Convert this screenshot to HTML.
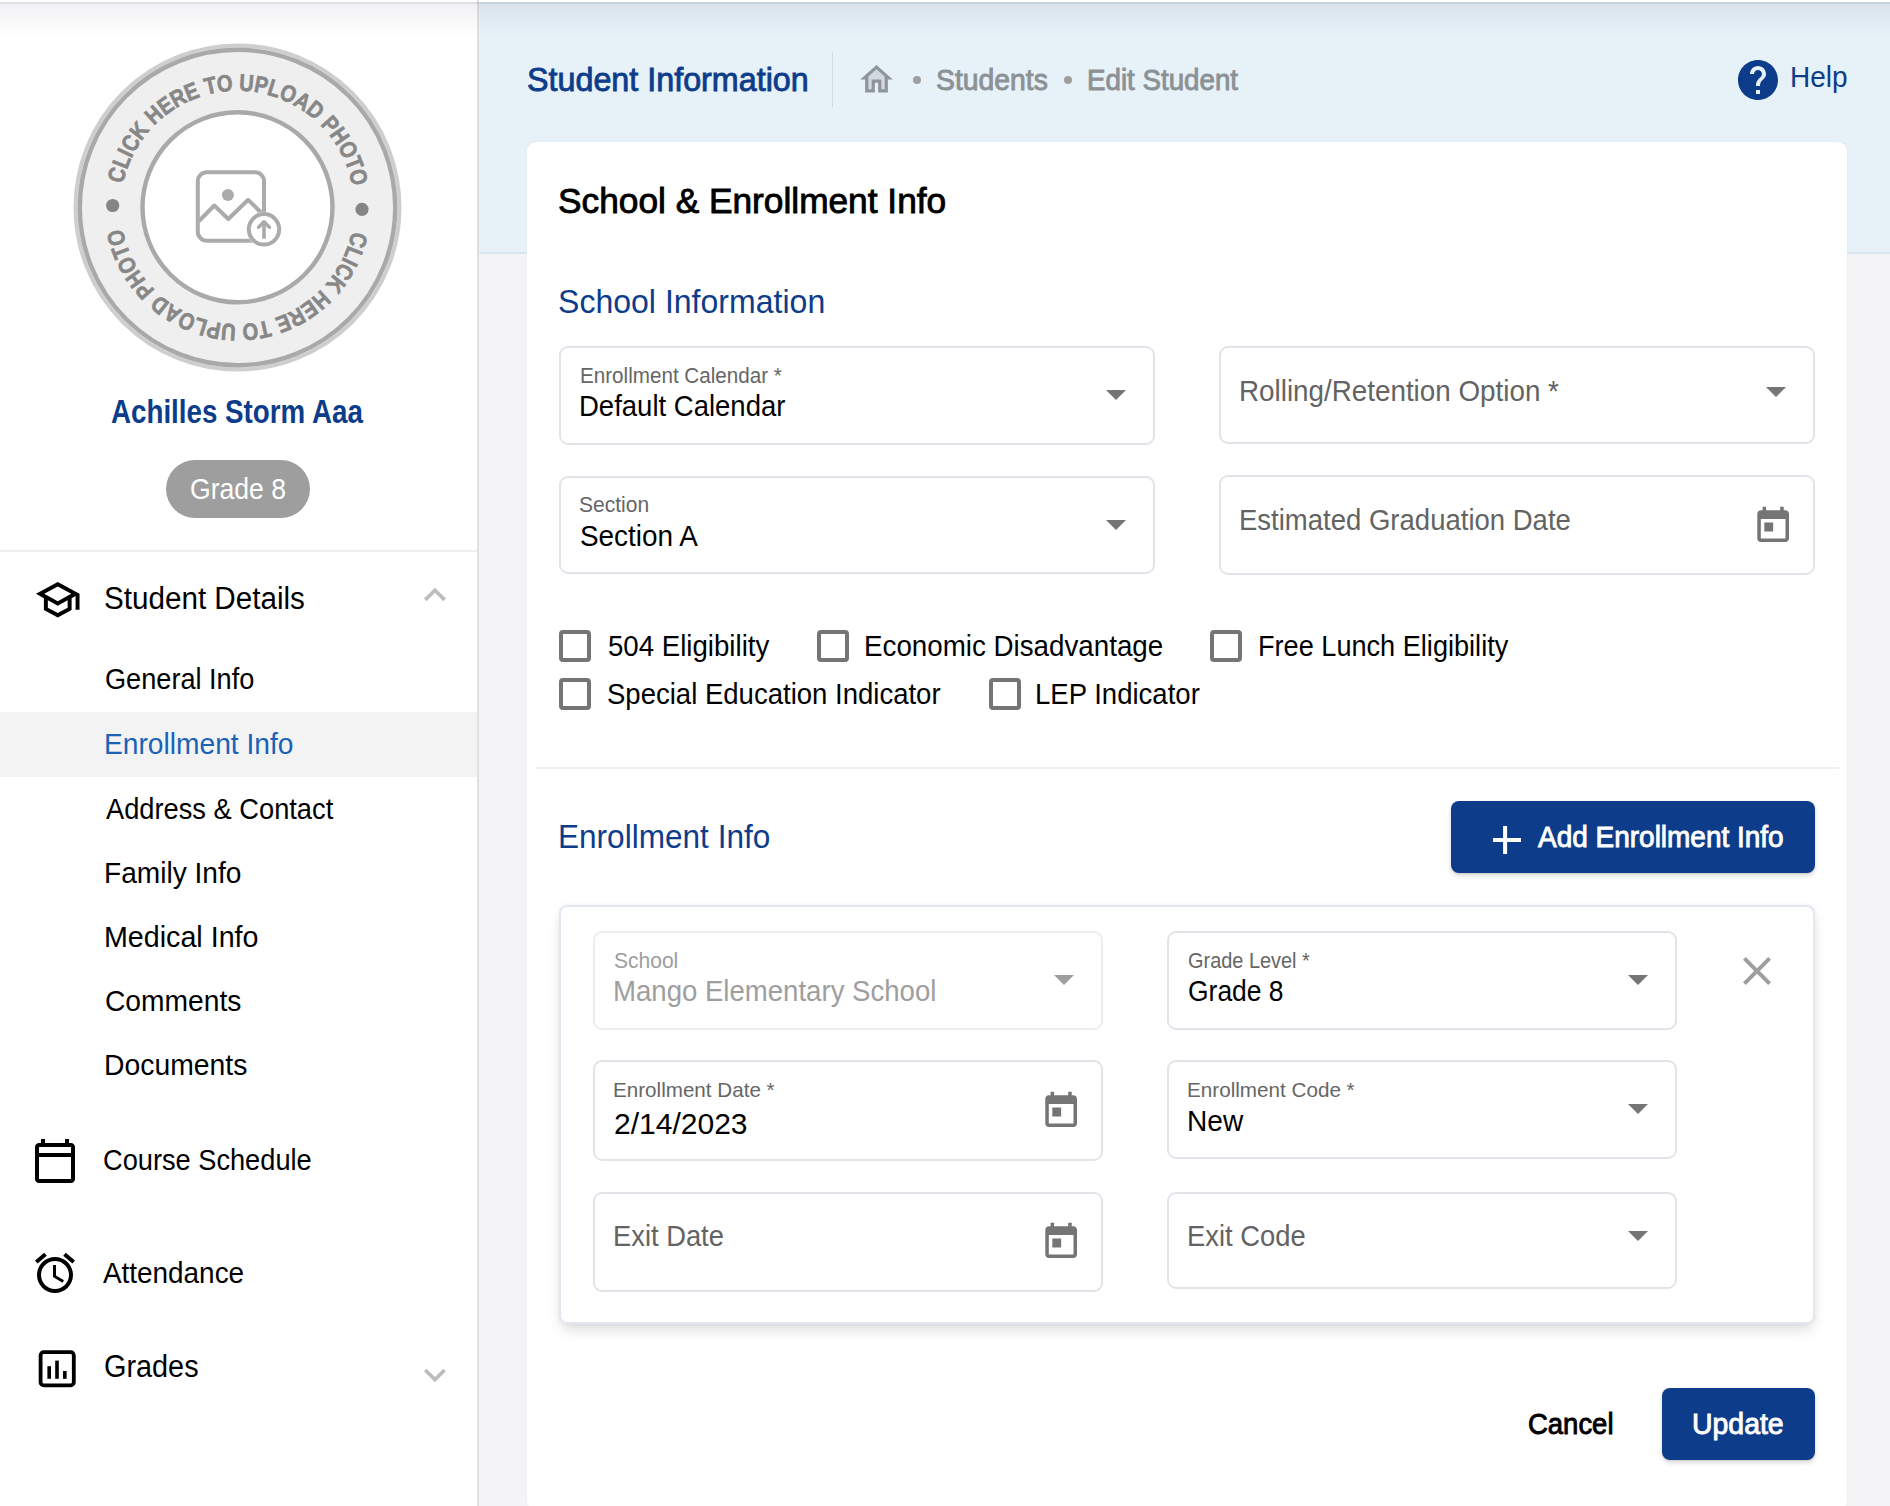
<!DOCTYPE html><html><head><meta charset="utf-8"><style>html,body{margin:0;padding:0;}body{width:1890px;height:1506px;overflow:hidden;position:relative;background:#fff;font-family:"Liberation Sans",sans-serif;}.t{position:absolute;white-space:nowrap;line-height:1;transform-origin:0 0;}</style></head><body>
<div style="position:absolute;left:479px;top:2px;width:1411px;height:251px;background:#e6f1f8;"></div>
<div style="position:absolute;left:479px;top:252px;width:1411px;height:2px;background:#d9e5ee;"></div>
<div style="position:absolute;left:479px;top:254px;width:1411px;height:1252px;background:#f4f4f7;"></div>
<div style="position:absolute;left:477px;top:0px;width:2px;height:1506px;background:#e1e1e2;"></div>
<div style="position:absolute;left:0px;top:2px;width:1890px;height:2px;background:rgba(30,20,60,0.14);"></div>
<div style="position:absolute;left:0px;top:4px;width:1890px;height:34px;background:linear-gradient(rgba(40,30,70,0.065),rgba(40,30,70,0.03) 45%,rgba(40,30,70,0.0));"></div>
<svg style="position:absolute;left:0px;top:0px;" width="478" height="400" viewBox="0 0 478 400"><circle cx="237.5" cy="207.5" r="162" fill="#efefef" stroke="#cecece" stroke-width="4"/><circle cx="237.5" cy="207.5" r="157.7" fill="none" stroke="#a9a9a9" stroke-width="4.4"/><circle cx="237.5" cy="206.7" r="95" fill="#fff" stroke="#a9a9a9" stroke-width="4.4" transform="translate(0,0.6)"/><defs><path id="arcTop" d="M 120.7 207.5 A 116.8 116.8 0 0 1 354.3 207.5"/><path id="arcBot" d="M 354.3 207.5 A 116.8 116.8 0 0 1 120.7 207.5"/></defs><text font-family="Liberation Sans" font-weight="bold" font-size="23.5" fill="#878787" stroke="#878787" stroke-width="0.7"><textPath href="#arcTop" startOffset="23.6" textLength="322.1" lengthAdjust="spacingAndGlyphs">CLICK HERE TO UPLOAD PHOTO</textPath></text><text font-family="Liberation Sans" font-weight="bold" font-size="23.5" fill="#878787" stroke="#878787" stroke-width="0.7"><textPath href="#arcBot" startOffset="23.6" textLength="322.1" lengthAdjust="spacingAndGlyphs">CLICK HERE TO UPLOAD PHOTO</textPath></text><circle cx="112.7" cy="205.5" r="6.6" fill="#858585"/><circle cx="362" cy="209.3" r="6.6" fill="#858585"/><rect x="197.8" y="172.3" width="66.2" height="68.4" rx="9" fill="none" stroke="#ababab" stroke-width="4"/><circle cx="227.9" cy="195" r="6" fill="#ababab"/><polyline points="199,221 214.3,205.5 228.3,219 248.2,199.8 262,213.5" fill="none" stroke="#ababab" stroke-width="4" stroke-linejoin="round"/><circle cx="264" cy="229.3" r="17.5" fill="#fff"/><circle cx="264" cy="229.3" r="15.2" fill="none" stroke="#ababab" stroke-width="4"/><path d="M264 237.5V222.5M258.6 227.2L264 221.8L269.4 227.2" fill="none" stroke="#ababab" stroke-width="3.6" stroke-linecap="round" stroke-linejoin="round"/></svg>
<div style="position:absolute;left:166px;top:460px;width:144px;height:58px;background:#9e9e9e;border-radius:29px;"></div>
<div style="position:absolute;left:0px;top:550px;width:477px;height:2px;background:#efefef;"></div>
<div style="position:absolute;left:0px;top:712px;width:477px;height:65px;background:#f3f3f3;"></div>
<svg style="position:absolute;left:33.5px;top:576.1px;" width="47.5" height="47.5" viewBox="0 0 24 24"><path d="M12 3 1 9l4 2.18v6L12 21l7-3.82v-6l2-1.09V17h2V9L12 3zm6.82 6L12 12.72 5.18 9 12 5.28 18.82 9zM17 15.99l-5 2.73-5-2.73v-3.72L12 15l5-2.73v3.72z" fill="#000"/></svg>
<svg style="position:absolute;left:413px;top:572.9px;" width="43.9" height="43.9" viewBox="0 0 24 24"><path d="M12 8l-6 6 1.41 1.41L12 10.83l4.59 4.58L18 14z" fill="#bdbdbd"/></svg>
<svg style="position:absolute;left:413px;top:1353.3px;" width="43.9" height="43.9" viewBox="0 0 24 24"><path d="M16.59 8.59 12 13.17 7.41 8.59 6 10l6 6 6-6z" fill="#bdbdbd"/></svg>
<svg style="position:absolute;left:31.05px;top:1136.9px;" width="48" height="48" viewBox="0 0 24 24"><path d="M20 3h-1V1h-2v2H7V1H5v2H4c-1.1 0-2 .9-2 2v16c0 1.1.9 2 2 2h16c1.1 0 2-.9 2-2V5c0-1.1-.9-2-2-2zm0 18H4V10h16v11zm0-13H4V5h16v3z" fill="#000"/></svg>
<svg style="position:absolute;left:31px;top:1249.3px;" width="48" height="48" viewBox="0 0 24 24"><path d="M22 5.72l-4.6-3.86-1.29 1.53 4.6 3.86L22 5.72zM7.88 3.39 6.6 1.86 2 5.71l1.29 1.53 4.59-3.85zM12.5 8H11v6l4.75 2.85.75-1.23-4-2.37V8zM12 4c-4.97 0-9 4.03-9 9s4.02 9 9 9c4.97 0 9-4.03 9-9s-4.03-9-9-9zm0 16c-3.87 0-7-3.13-7-7s3.13-7 7-7 7 3.13 7 7-3.13 7-7 7z" fill="#000"/></svg>
<svg style="position:absolute;left:33px;top:1345px;" width="48" height="48" viewBox="0 0 24 24"><rect x="3.8" y="3.6" width="16.6" height="16.6" rx="1.6" fill="none" stroke="#000" stroke-width="1.9"/><rect x="7.2" y="10.6" width="1.8" height="6.3" fill="#000"/><rect x="11.1" y="7.8" width="1.8" height="9.1" fill="#000"/><rect x="15" y="13" width="1.8" height="3.9" fill="#000"/></svg>
<div style="position:absolute;left:831.5px;top:52px;width:1.5px;height:55px;background:#d3dbe2;"></div>
<svg style="position:absolute;left:857.3px;top:60.1px;" width="39" height="39" viewBox="0 0 24 24"><path d="M12 3 2 12h3v8h6v-6h2v6h6v-8h3L12 3z" fill="#8f969b"/><path d="M7 10.19V18h2v-6h6v6h2v-7.81l-5-4.5z" fill="#d2dae1"/></svg>
<div style="position:absolute;left:913px;top:76px;width:8px;height:8px;border-radius:50%;background:#9e9e9e"></div>
<div style="position:absolute;left:1064px;top:76px;width:8px;height:8px;border-radius:50%;background:#9e9e9e"></div>
<svg style="position:absolute;left:1734px;top:56px;" width="48" height="48" viewBox="0 0 24 24"><path d="M12 2C6.48 2 2 6.48 2 12s4.48 10 10 10 10-4.48 10-10S17.52 2 12 2zm1 17h-2v-2h2v2zm2.07-7.75-.9.92C13.45 12.9 13 13.5 13 15h-2v-.5c0-1.1.45-2.1 1.17-2.83l1.24-1.26c.37-.36.59-.86.59-1.41 0-1.1-.9-2-2-2s-2 .9-2 2H8c0-2.21 1.79-4 4-4s4 1.79 4 4c0 .88-.36 1.68-.93 2.25z" fill="#0d3d8a"/></svg>
<div style="position:absolute;left:527px;top:142px;width:1320px;height:1368px;background:#fff;border-radius:9px;box-shadow:0 0 1px rgba(60,50,90,0.15);"></div>
<div style="position:absolute;left:559px;top:346px;width:592px;height:95px;border:2px solid #e5e3ea;border-radius:9px;"></div>
<div style="position:absolute;left:1219px;top:346px;width:592px;height:94px;border:2px solid #e5e3ea;border-radius:9px;"></div>
<div style="position:absolute;left:559px;top:476px;width:592px;height:94px;border:2px solid #e5e3ea;border-radius:9px;"></div>
<div style="position:absolute;left:1219px;top:475px;width:592px;height:96px;border:2px solid #e5e3ea;border-radius:9px;"></div>
<svg style="position:absolute;left:1106px;top:390px;" width="20" height="10" viewBox="0 0 20 10"><path d="M0 0h20L10 10z" fill="#757575"/></svg>
<svg style="position:absolute;left:1766px;top:387px;" width="20" height="10" viewBox="0 0 20 10"><path d="M0 0h20L10 10z" fill="#757575"/></svg>
<svg style="position:absolute;left:1106px;top:520px;" width="20" height="10" viewBox="0 0 20 10"><path d="M0 0h20L10 10z" fill="#757575"/></svg>
<svg style="position:absolute;left:1752px;top:505px;" width="42.3" height="42.3" viewBox="0 0 24 24"><path d="M19 3h-1V1h-2v2H8V1H6v2H5c-1.11 0-1.99.9-1.99 2L3 19c0 1.1.89 2 2 2h14c1.1 0 2-.9 2-2V5c0-1.1-.9-2-2-2zm0 16H5V8h14v11zM7 10h5v5H7z" fill="#757575"/></svg>
<div style="position:absolute;left:559px;top:630px;width:32px;height:32px;box-sizing:border-box;border:4px solid #757575;border-radius:4px;"></div>
<div style="position:absolute;left:817px;top:630px;width:32px;height:32px;box-sizing:border-box;border:4px solid #757575;border-radius:4px;"></div>
<div style="position:absolute;left:1210px;top:630px;width:32px;height:32px;box-sizing:border-box;border:4px solid #757575;border-radius:4px;"></div>
<div style="position:absolute;left:559px;top:678px;width:32px;height:32px;box-sizing:border-box;border:4px solid #757575;border-radius:4px;"></div>
<div style="position:absolute;left:989px;top:678px;width:32px;height:32px;box-sizing:border-box;border:4px solid #757575;border-radius:4px;"></div>
<div style="position:absolute;left:535px;top:767px;width:1304px;height:2px;background:#f0f0f3;"></div>
<div style="position:absolute;left:1451px;top:801px;width:364px;height:72px;background:#0d3d8a;border-radius:8px;box-shadow:0 3px 5px rgba(0,0,0,0.13),0 1px 2px rgba(0,0,0,0.10);"></div>
<svg style="position:absolute;left:1492.8px;top:826px;" width="28.2" height="28" viewBox="0 0 28.2 28"><path d="M12.1 0v28M0 14h28.2" stroke="#fff" stroke-width="4"/></svg>
<div style="position:absolute;left:559px;top:905px;width:1256px;height:419px;box-sizing:border-box;border:2px solid #e2e7f0;border-radius:8px;box-shadow:0 8px 14px -3px rgba(0,0,0,0.15),0 0 6px rgba(0,0,0,0.045);background:#fff;"></div>
<div style="position:absolute;left:593px;top:931px;width:506px;height:95px;border:2px solid #eeedf1;border-radius:9px;"></div>
<div style="position:absolute;left:1167px;top:931px;width:506px;height:95px;border:2px solid #e5e3ea;border-radius:9px;"></div>
<div style="position:absolute;left:593px;top:1060px;width:506px;height:97px;border:2px solid #e5e3ea;border-radius:9px;"></div>
<div style="position:absolute;left:1167px;top:1060px;width:506px;height:95px;border:2px solid #e5e3ea;border-radius:9px;"></div>
<div style="position:absolute;left:593px;top:1192px;width:506px;height:96px;border:2px solid #e5e3ea;border-radius:9px;"></div>
<div style="position:absolute;left:1167px;top:1192px;width:506px;height:93px;border:2px solid #e5e3ea;border-radius:9px;"></div>
<svg style="position:absolute;left:1054px;top:975px;" width="20" height="10" viewBox="0 0 20 10"><path d="M0 0h20L10 10z" fill="#9e9e9e"/></svg>
<svg style="position:absolute;left:1628px;top:975px;" width="20" height="10" viewBox="0 0 20 10"><path d="M0 0h20L10 10z" fill="#757575"/></svg>
<svg style="position:absolute;left:1628px;top:1104px;" width="20" height="10" viewBox="0 0 20 10"><path d="M0 0h20L10 10z" fill="#757575"/></svg>
<svg style="position:absolute;left:1628px;top:1231px;" width="20" height="10" viewBox="0 0 20 10"><path d="M0 0h20L10 10z" fill="#757575"/></svg>
<svg style="position:absolute;left:1039.7px;top:1089.7px;" width="42.3" height="42.3" viewBox="0 0 24 24"><path d="M19 3h-1V1h-2v2H8V1H6v2H5c-1.11 0-1.99.9-1.99 2L3 19c0 1.1.89 2 2 2h14c1.1 0 2-.9 2-2V5c0-1.1-.9-2-2-2zm0 16H5V8h14v11zM7 10h5v5H7z" fill="#757575"/></svg>
<svg style="position:absolute;left:1039.7px;top:1220.6px;" width="42.3" height="42.3" viewBox="0 0 24 24"><path d="M19 3h-1V1h-2v2H8V1H6v2H5c-1.11 0-1.99.9-1.99 2L3 19c0 1.1.89 2 2 2h14c1.1 0 2-.9 2-2V5c0-1.1-.9-2-2-2zm0 16H5V8h14v11zM7 10h5v5H7z" fill="#757575"/></svg>
<svg style="position:absolute;left:1733px;top:947px;" width="48" height="48" viewBox="0 0 24 24"><path d="M19 6.41 17.59 5 12 10.59 6.41 5 5 6.41 10.59 12 5 17.59 6.41 19 12 13.41 17.59 19 19 17.59 13.41 12z" fill="#9e9e9e"/></svg>
<div style="position:absolute;left:1662px;top:1388px;width:153px;height:72px;background:#0d3d8a;border-radius:8px;box-shadow:0 3px 5px rgba(0,0,0,0.13),0 1px 2px rgba(0,0,0,0.10);"></div>
<div id="t_hdr_title" class="t" style="left:526.84px;top:62.42px;font-size:34.0px;color:#0d3d8a;-webkit-text-stroke:0.9px #0d3d8a;transform:scaleX(0.9496)">Student Information</div>
<div id="t_bc_students" class="t" style="left:936.45px;top:66.35px;font-size:29.0px;color:#8c9196;-webkit-text-stroke:0.9px #8c9196;transform:scaleX(0.9773)">Students</div>
<div id="t_bc_edit" class="t" style="left:1086.60px;top:66.35px;font-size:29.0px;color:#8c9196;-webkit-text-stroke:0.9px #8c9196;transform:scaleX(0.9560)">Edit Student</div>
<div id="t_help" class="t" style="left:1790.14px;top:63.35px;font-size:29.0px;color:#0d3d8a;transform:scaleX(0.9648)">Help</div>
<div id="t_card_title" class="t" style="left:557.86px;top:183.86px;font-size:35.6px;color:#000;-webkit-text-stroke:0.9px #000;transform:scaleX(0.9913)">School &amp; Enrollment Info</div>
<div id="t_school_info" class="t" style="left:558.24px;top:284.93px;font-size:33.4px;color:#0d3d8a;transform:scaleX(0.9598)">School Information</div>
<div id="t_lbl_cal" class="t" style="left:579.71px;top:364.72px;font-size:21.6px;color:#666;transform:scaleX(0.9556)">Enrollment Calendar *</div>
<div id="t_val_cal" class="t" style="left:578.71px;top:392.45px;font-size:29.0px;color:#000;transform:scaleX(0.9484)">Default Calendar</div>
<div id="t_ph_roll" class="t" style="left:1239.44px;top:376.75px;font-size:29.0px;color:#636363;transform:scaleX(0.9586)">Rolling/Retention Option *</div>
<div id="t_lbl_sec" class="t" style="left:579.24px;top:493.65px;font-size:21.2px;color:#666;transform:scaleX(0.9917)">Section</div>
<div id="t_val_sec" class="t" style="left:579.62px;top:522.45px;font-size:29.0px;color:#000;transform:scaleX(0.9617)">Section A</div>
<div id="t_ph_grad" class="t" style="left:1239.14px;top:506.35px;font-size:29.0px;color:#636363;transform:scaleX(0.9487)">Estimated Graduation Date</div>
<div id="t_cb1" class="t" style="left:607.70px;top:632.45px;font-size:29.0px;color:#000;transform:scaleX(0.9529)">504 Eligibility</div>
<div id="t_cb2" class="t" style="left:863.69px;top:632.45px;font-size:29.0px;color:#000;transform:scaleX(0.9568)">Economic Disadvantage</div>
<div id="t_cb3" class="t" style="left:1257.55px;top:632.45px;font-size:29.0px;color:#000;transform:scaleX(0.9353)">Free Lunch Eligibility</div>
<div id="t_cb4" class="t" style="left:607.30px;top:680.45px;font-size:29.0px;color:#000;transform:scaleX(0.9492)">Special Education Indicator</div>
<div id="t_cb5" class="t" style="left:1035.06px;top:680.45px;font-size:29.0px;color:#000;transform:scaleX(0.9496)">LEP Indicator</div>
<div id="t_enr_head" class="t" style="left:558.13px;top:819.90px;font-size:33.2px;color:#0d3d8a;transform:scaleX(0.9511)">Enrollment Info</div>
<div id="t_add_btn" class="t" style="left:1538.21px;top:823.35px;font-size:29.0px;color:#fff;-webkit-text-stroke:0.9px #fff;transform:scaleX(0.9646)">Add Enrollment Info</div>
<div id="t_lbl_school" class="t" style="left:613.51px;top:949.62px;font-size:21.6px;color:#9e9e9e;transform:scaleX(0.9732)">School</div>
<div id="t_val_school" class="t" style="left:612.81px;top:977.35px;font-size:29.0px;color:#9e9e9e;transform:scaleX(0.9508)">Mango Elementary School</div>
<div id="t_lbl_grade" class="t" style="left:1188.46px;top:950.68px;font-size:21.4px;color:#666;transform:scaleX(0.9315)">Grade Level *</div>
<div id="t_val_grade" class="t" style="left:1187.91px;top:977.45px;font-size:29.0px;color:#000;transform:scaleX(0.9120)">Grade 8</div>
<div id="t_lbl_edate" class="t" style="left:613.24px;top:1078.82px;font-size:21.0px;color:#666;transform:scaleX(0.9819)">Enrollment Date *</div>
<div id="t_val_edate" class="t" style="left:613.84px;top:1109.65px;font-size:29.0px;color:#000;transform:scaleX(1.0353)">2/14/2023</div>
<div id="t_lbl_ecode" class="t" style="left:1186.90px;top:1078.92px;font-size:21.0px;color:#666;transform:scaleX(0.9838)">Enrollment Code *</div>
<div id="t_val_ecode" class="t" style="left:1186.85px;top:1107.45px;font-size:29.0px;color:#000;transform:scaleX(0.9680)">New</div>
<div id="t_ph_exitdate" class="t" style="left:612.68px;top:1222.05px;font-size:29.0px;color:#636363;transform:scaleX(0.9424)">Exit Date</div>
<div id="t_ph_exitcode" class="t" style="left:1186.59px;top:1222.05px;font-size:29.0px;color:#636363;transform:scaleX(0.9436)">Exit Code</div>
<div id="t_cancel" class="t" style="left:1528.36px;top:1409.65px;font-size:29.0px;color:#000;-webkit-text-stroke:0.9px #000;transform:scaleX(0.9471)">Cancel</div>
<div id="t_update" class="t" style="left:1692.13px;top:1409.65px;font-size:29.0px;color:#fff;-webkit-text-stroke:0.9px #fff;transform:scaleX(0.9800)">Update</div>
<div id="t_name" class="t" style="left:111.45px;top:396.49px;font-size:32.5px;font-weight:bold;color:#0d3d8a;transform:scaleX(0.8537)">Achilles Storm Aaa</div>
<div id="t_pill" class="t" style="left:190.25px;top:475.05px;font-size:29.0px;color:#fff;transform:scaleX(0.9169)">Grade 8</div>
<div id="t_nav_sd" class="t" style="left:103.84px;top:582.76px;font-size:31.0px;color:#000;transform:scaleX(0.9557)">Student Details</div>
<div id="t_nav_gi" class="t" style="left:104.55px;top:664.65px;font-size:29.0px;color:#000;transform:scaleX(0.9357)">General Info</div>
<div id="t_nav_ei" class="t" style="left:103.75px;top:730.25px;font-size:29.0px;color:#1a62b7;transform:scaleX(0.9718)">Enrollment Info</div>
<div id="t_nav_ac" class="t" style="left:106.00px;top:795.35px;font-size:29.0px;color:#000;transform:scaleX(0.9397)">Address &amp; Contact</div>
<div id="t_nav_fi" class="t" style="left:103.75px;top:859.35px;font-size:29.0px;color:#000;transform:scaleX(0.9687)">Family Info</div>
<div id="t_nav_mi" class="t" style="left:103.71px;top:923.45px;font-size:29.0px;color:#000;transform:scaleX(0.9880)">Medical Info</div>
<div id="t_nav_cm" class="t" style="left:104.59px;top:987.45px;font-size:29.0px;color:#000;transform:scaleX(0.9728)">Comments</div>
<div id="t_nav_dc" class="t" style="left:103.73px;top:1051.45px;font-size:29.0px;color:#000;transform:scaleX(0.9772)">Documents</div>
<div id="t_nav_cs" class="t" style="left:102.80px;top:1145.95px;font-size:29.0px;color:#000;transform:scaleX(0.9380)">Course Schedule</div>
<div id="t_nav_at" class="t" style="left:103.48px;top:1259.45px;font-size:29.0px;color:#000;transform:scaleX(0.9615)">Attendance</div>
<div id="t_nav_gr" class="t" style="left:104.11px;top:1351.26px;font-size:31.0px;color:#000;transform:scaleX(0.9303)">Grades</div>
</body></html>
